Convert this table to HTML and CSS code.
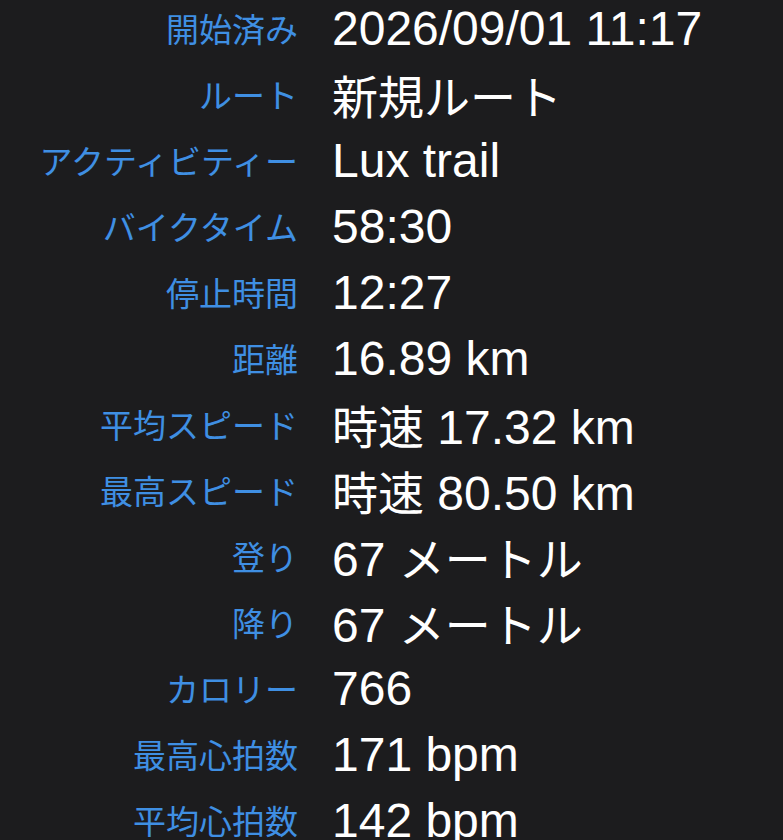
FILE: index.html
```html
<!DOCTYPE html>
<html lang="ja">
<head>
<meta charset="utf-8">
<link rel="stylesheet" href="styles.css">
</head>
<body>
<div class="list">
  <div class="label">開始済み</div><div class="value">2026/09/01 11:17</div>
  <div class="label">ルート</div><div class="value"><span class="jp">新規ルート</span></div>
  <div class="label">アクティビティー</div><div class="value">Lux trail</div>
  <div class="label">バイクタイム</div><div class="value">58:30</div>
  <div class="label">停止時間</div><div class="value">12:27</div>
  <div class="label">距離</div><div class="value">16.89 km</div>
  <div class="label">平均スピード</div><div class="value"><span class="jp">時速</span> 17.32 km</div>
  <div class="label">最高スピード</div><div class="value"><span class="jp">時速</span> 80.50 km</div>
  <div class="label">登り</div><div class="value">67 <span class="jp">メートル</span></div>
  <div class="label">降り</div><div class="value">67 <span class="jp">メートル</span></div>
  <div class="label">カロリー</div><div class="value">766</div>
  <div class="label">最高心拍数</div><div class="value">171 bpm</div>
  <div class="label">平均心拍数</div><div class="value">142 bpm</div>
</div>
</body>
</html>
```
FILE: styles.css
```css
html, body {
  margin: 0;
  padding: 0;
  background: #1c1c1e;
  overflow: hidden;
}
.list {
  display: grid;
  grid-template-columns: 298px 1fr;
  grid-auto-rows: 66px;
  column-gap: 34px;
  align-items: center;
  margin-top: -5px;
}
.label {
  text-align: right;
  color: #3f8fe3;
  font-family: "Noto Sans CJK JP", "Noto Sans", sans-serif;
  font-size: 33px;
  white-space: nowrap;
}
.value {
  color: #ffffff;
  font-family: "Liberation Sans", "Noto Sans CJK JP", sans-serif;
  font-size: 48px;
  white-space: nowrap;
}
.jp {
  font-family: "Noto Sans CJK JP", sans-serif;
  font-size: 46px;
}
```
